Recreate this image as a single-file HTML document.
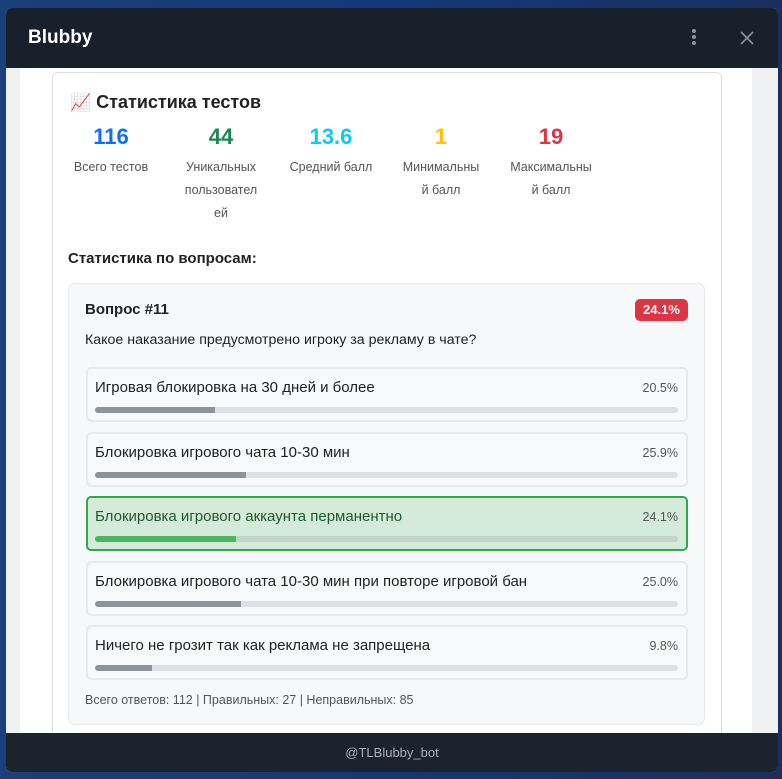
<!DOCTYPE html>
<html><head><meta charset="utf-8"><style>
*{margin:0;padding:0;box-sizing:border-box}
body{width:782px;height:779px;overflow:hidden;background:linear-gradient(90deg,#1b3f7a,#123a78 50%,#1a2f5e);font-family:"Liberation Sans","DejaVu Sans",sans-serif;position:relative}
.a{position:absolute}
.win{left:6px;top:8px;width:772px;height:764px;border-radius:6px;overflow:hidden;background:#eef0f2}
.hdr{left:0;top:0;width:772px;height:60px;background:#17202b;color:#fff}
.col{left:14px;top:60px;width:732px;height:680px;background:#fff}
.card{left:46px;top:64px;width:670px;height:700px;border:1px solid #dcdfe3;border-radius:6px;background:#fff}
.ftr{left:0;top:725px;width:772px;height:39px;background:#1b232d;color:#aab0b8;font-size:13px;text-align:center;line-height:39px}
.stat{text-align:center;width:100px}
.num{font-size:22px;font-weight:bold}
.lab{font-size:12.5px;color:#555;line-height:23px;margin-top:6px}
.q{left:68px;top:283px;width:637px;height:442px;background:#f7f8f9;border:1px solid #e6e8eb;border-radius:7px}
.opt{left:86px;width:602px;height:55px;border:2px solid #e7e9ec;border-radius:5px;background:#f8f9fa}
.opt .t{position:absolute;left:7px;top:10px;font-size:15px;color:#222}
.opt .p{position:absolute;right:8px;top:12px;font-size:12.5px;color:#555}
.opt .b{position:absolute;left:7px;top:38px;width:583px;height:6px;border-radius:3px;background:#dee0e3;overflow:hidden}
.opt .b i{display:block;height:100%;background:#8d9399}
.ok{background:#d4ebd9;border-color:#2fa84b}
.ok .t{color:#1e5a2e}
.ok .b{background:#c2d5c6}.ok .b i{background:#4cb563}
</style></head><body>
<div class="a win">
<div class="a hdr"><div class="a" style="left:22px;top:19px;font-size:19px;font-weight:bold">Blubby</div>
<div class="a" style="left:686px;top:21px;width:4px;height:4px;border-radius:2px;background:#8a929b;box-shadow:0 6px #8a929b,0 12px #8a929b"></div>
<svg class="a" style="left:734px;top:23px" width="14" height="14" viewBox="0 0 14 14"><path d="M1 1L13 13M13 1L1 13" stroke="#8a929b" stroke-width="1.6"/></svg></div>
<div class="a col"></div>
<div class="a ftr">@TLBlubby_bot</div>
</div>
<div class="a card" style="left:52px;top:72px;width:670px;height:661px;border-bottom:none;border-radius:6px 6px 0 0"></div>
<div class="a" style="left:70px;top:92px;font-size:18px;font-weight:bold;color:#222"><span style="font-size:17px">📈</span>&nbsp;Статистика тестов</div>
<div class="a stat" style="left:61px;top:124px"><div class="num" style="color:#0d6efd">116</div><div class="lab">Всего тестов</div></div>
<div class="a stat" style="left:171px;top:124px"><div class="num" style="color:#198754">44</div><div class="lab">Уникальных<br>пользовател<br>ей</div></div>
<div class="a stat" style="left:281px;top:124px"><div class="num" style="color:#0dcaf0">13.6</div><div class="lab">Средний балл</div></div>
<div class="a stat" style="left:391px;top:124px"><div class="num" style="color:#ffc107">1</div><div class="lab">Минимальны<br>й балл</div></div>
<div class="a stat" style="left:501px;top:124px"><div class="num" style="color:#dc3545">19</div><div class="lab">Максимальны<br>й балл</div></div>
<div class="a" style="left:68px;top:250px;font-size:15px;font-weight:bold;color:#222">Статистика по вопросам:</div>
<div class="a q"></div>
<div class="a" style="left:85px;top:301px;font-size:15px;font-weight:bold;color:#222">Вопрос #11</div>
<div class="a" style="left:635px;top:299px;width:53px;height:22px;border-radius:5px;background:#dc3545;color:#fff;font-size:13px;font-weight:bold;text-align:center;line-height:22px">24.1%</div>
<div class="a" style="left:85px;top:332px;font-size:14.2px;color:#222">Какое наказание предусмотрено игроку за рекламу в чате?</div>
<div class="a opt" style="top:367px"><span class="t">Игровая блокировка на 30 дней и более</span><span class="p">20.5%</span><div class="b"><i style="width:20.5%"></i></div></div>
<div class="a opt" style="top:432px"><span class="t">Блокировка игрового чата 10-30 мин</span><span class="p">25.9%</span><div class="b"><i style="width:25.9%"></i></div></div>
<div class="a opt ok" style="top:496px"><span class="t">Блокировка игрового аккаунта перманентно</span><span class="p">24.1%</span><div class="b"><i style="width:24.1%"></i></div></div>
<div class="a opt" style="top:561px"><span class="t">Блокировка игрового чата 10-30 мин при повторе игровой бан</span><span class="p">25.0%</span><div class="b"><i style="width:25%"></i></div></div>
<div class="a opt" style="top:625px"><span class="t">Ничего не грозит так как реклама не запрещена</span><span class="p">9.8%</span><div class="b"><i style="width:9.8%"></i></div></div>
<div class="a" style="left:85px;top:693px;font-size:12.5px;color:#555">Всего ответов: 112 | Правильных: 27 | Неправильных: 85</div>
</body></html>
